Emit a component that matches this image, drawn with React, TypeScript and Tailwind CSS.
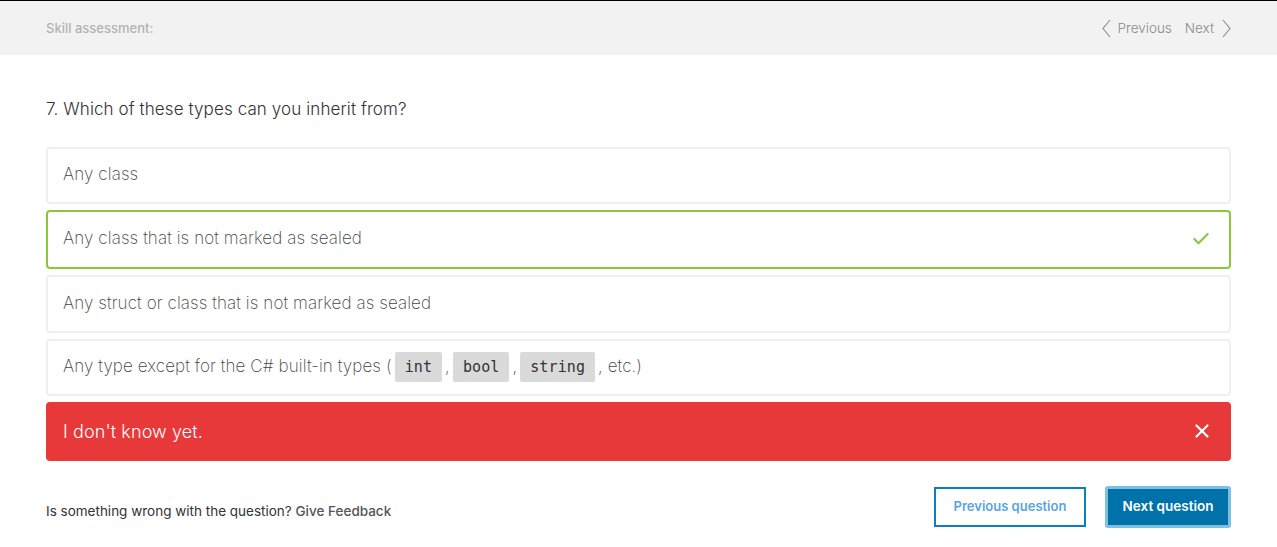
import { Check, X } from "lucide-react";

const font = { fontFamily: "Inter, 'Noto Sans', sans-serif" };

function Code({ children }: { children: string }) {
  return (
    <code className="mx-[3px] inline-flex h-[30px] items-center rounded-[2px] bg-[#dadada] px-[10px] font-['DejaVu_Sans_Mono',monospace] text-[15px] font-medium text-[#333]">
      {children}
    </code>
  );
}

function Chevron({ dir }: { dir: "left" | "right" }) {
  return (
    <svg width="9" height="19" viewBox="0 0 9 19" fill="none" stroke="currentColor" strokeWidth="1.1">
      {dir === "left" ? <path d="M8 1 L1 9.5 L8 18" /> : <path d="M1 1 L8 9.5 L1 18" />}
    </svg>
  );
}

export default function App() {
  return (
    <div className="h-[547px] w-[1277px] border-t border-black bg-white" style={font}>
      {/* header */}
      <div className="flex h-[54px] items-center justify-between bg-[#f2f2f2] px-[46px] pt-[1px]">
        <span className="text-[13px] font-medium text-[#b3b3b3]">Skill assessment:</span>
        <div className="flex items-center text-[13.5px] font-light text-[#8a8a8a]">
          <Chevron dir="left" />
          <span className="ml-[7px]">Previous</span>
          <span className="ml-[13px]">Next</span>
          <span className="ml-[8px]">
            <Chevron dir="right" />
          </span>
        </div>
      </div>

      <div className="px-[46px]">
        <h1 className="mt-[42px] text-[17px] font-light tracking-[0.1px] text-[#333]">
          7. Which of these types can you inherit from?
        </h1>

        <div className="mt-[24px] flex flex-col gap-[6px] tracking-[0.1px]">
          <div className="flex h-[57px] items-center rounded-[4px] border-2 border-[#efefef] px-[15px] text-[17px] font-extralight text-[#444]">
            Any class
          </div>
          <div className="flex h-[59px] items-center justify-between rounded-[4px] border-2 border-[#8cc63f] px-[15px] text-[17px] font-extralight text-[#444]">
            <span>Any class that is not marked as sealed</span>
            <Check className="mr-[3px] h-[20px] w-[20px] text-[#8cc63f]" strokeWidth={2.6} />
          </div>
          <div className="flex h-[58px] items-center rounded-[4px] border-2 border-[#efefef] px-[15px] text-[17px] font-extralight text-[#444]">
            Any struct or class that is not marked as sealed
          </div>
          <div className="flex h-[57px] items-center rounded-[4px] border-2 border-[#efefef] px-[15px] text-[17px] font-extralight text-[#444]">
            <span>Any type except for the C# built-in types (</span>
            <Code>int</Code>
            <span>,</span>
            <Code>bool</Code>
            <span>,</span>
            <Code>string</Code>
            <span>, etc.)</span>
          </div>
          <div className="flex h-[59px] items-center justify-between rounded-[4px] bg-[#e8393a] px-[17px] text-[18px] font-light text-white">
            <span>I don't know yet.</span>
            <X className="mr-[1px] h-[22px] w-[22px]" strokeWidth={2.4} />
          </div>
        </div>

        <div className="mt-[25px] flex items-center justify-between">
          <p className="mt-[10px] text-[13.5px] text-[#333]">
            Is something wrong with the question? <span className="font-medium text-[#555]">Give Feedback</span>
          </p>
          <div className="flex items-center gap-[19px]">
            <button className="h-[40px] w-[152px] border-2 border-[#0a80c0] bg-white text-[13px] font-semibold text-[#5aa5dc]">
              Previous question
            </button>
            <button className="h-[42px] w-[126px] rounded-[3px] border-[3px] border-[#7fc0e0] bg-[#0072aa] text-[13.5px] font-semibold text-white">
              Next question
            </button>
          </div>
        </div>
      </div>
    </div>
  );
}
